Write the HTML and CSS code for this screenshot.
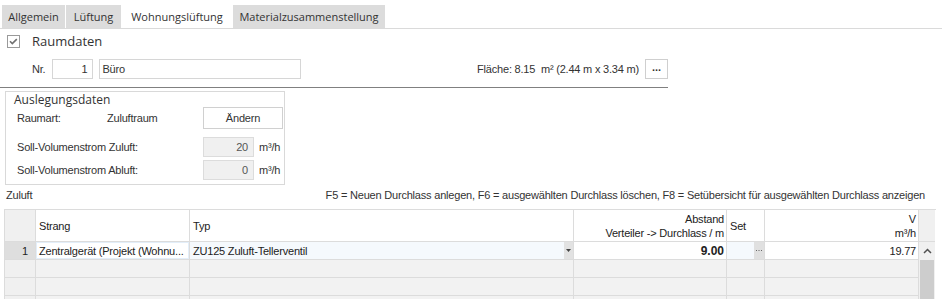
FILE: index.html
```html
<!DOCTYPE html>
<html lang="de">
<head>
    <meta charset="UTF-8">
    <title>Wohnungslüftung</title>
    <link rel="stylesheet" href="styles.css">
</head>
<body>
    <div class="tabs">
        <div class="tab tab-1">Allgemein</div>
        <div class="tab tab-2">Lüftung</div>
        <div class="tab tab-3 active">Wohnungslüftung</div>
        <div class="tab tab-4">Materialzusammenstellung</div>
    </div>

    <div class="section-head">
        <svg class="check" width="13" height="13" viewBox="0 0 13 13">
            <rect x="0.5" y="0.5" width="12" height="12" fill="#fff" stroke="#9a9a9a"/>
            <path d="M3 6.3 L5.3 8.6 L9.8 4.1" fill="none" stroke="#707070" stroke-width="1.6"/>
        </svg>
        <span>Raumdaten</span>
    </div>

    <div class="room-row">
        <span class="nr-label">Nr.</span>
        <div class="field field-nr">1</div>
        <div class="field field-name">Büro</div>
        <div class="spacer"></div>
        <span class="area">Fläche: 8.15 &nbsp;m² (2.44 m x 3.34 m)</span>
        <div class="dots-btn">...</div>
    </div>
    <div class="divider"></div>

    <div class="ausl">
        <div class="ausl-title">Auslegungsdaten</div>
        <div class="ausl-row row-art">
            <span class="lbl-art">Raumart:</span>
            <span class="val-art">Zuluftraum</span>
            <div class="btn">Ändern</div>
        </div>
        <div class="ausl-row row-zu">
            <span class="lbl-vol">Soll-Volumenstrom Zuluft:</span>
            <div class="num">20</div>
            <span class="unit">m³/h</span>
        </div>
        <div class="ausl-row row-ab">
            <span class="lbl-vol">Soll-Volumenstrom Abluft:</span>
            <div class="num">0</div>
            <span class="unit">m³/h</span>
        </div>
    </div>

    <div class="caption">
        <span>Zuluft</span>
        <span>F5 = Neuen Durchlass anlegen, F6 = ausgewählten Durchlass löschen, F8 = Setübersicht für ausgewählten Durchlass anzeigen</span>
    </div>

    <div class="grid">
        <div class="cell rowhead"></div>
        <div class="cell head">Strang</div>
        <div class="cell head">Typ</div>
        <div class="cell head right">Abstand<br>Verteiler -&gt; Durchlass / m</div>
        <div class="cell head">Set</div>
        <div class="cell head right">V<br>m³/h</div>
        <div class="cell corner"></div>

        <div class="cell rowhead current">1</div>
        <div class="cell focus">Zentralgerät (Projekt (Wohnu...</div>
        <div class="cell edit">
            <span class="edit-text">ZU125 Zuluft-Tellerventil</span>
            <span class="drop"><svg width="5" height="3" viewBox="0 0 5 3"><path d="M0 0 H5 L2.5 3 Z" fill="#444"/></svg></span>
        </div>
        <div class="cell right bold">9.00</div>
        <div class="cell edit">
            <span class="edit-text"></span>
            <span class="set-btn">
                <svg width="6" height="2" viewBox="0 0 6 2"><rect x="0" y="0" width="1" height="1" fill="#666"/><rect x="2.5" y="0" width="1" height="1" fill="#666"/><rect x="5" y="0" width="1" height="1" fill="#666"/></svg>
            </span>
        </div>
        <div class="cell right">19.77</div>
        <div class="scrollbar">
            <div class="arrow">
                <svg width="9" height="6" viewBox="0 0 9 6"><path d="M1 5 L4.5 1.5 L8 5" fill="none" stroke="#505050" stroke-width="1.5"/></svg>
            </div>
            <div class="thumb"></div>
        </div>

        <div class="cell rowhead"></div>
        <div class="cell empty"></div>
        <div class="cell empty"></div>
        <div class="cell empty"></div>
        <div class="cell empty"></div>
        <div class="cell empty"></div>

        <div class="cell rowhead"></div>
        <div class="cell empty"></div>
        <div class="cell empty"></div>
        <div class="cell empty"></div>
        <div class="cell empty"></div>
        <div class="cell empty"></div>

        <div class="cell rowhead"></div>
        <div class="cell empty"></div>
        <div class="cell empty"></div>
        <div class="cell empty"></div>
        <div class="cell empty"></div>
        <div class="cell empty"></div>
    </div>
</body>
</html>
```

FILE: styles.css
```css
body {
    margin: 0;
    width: 942px;
    height: 299px;
    overflow: hidden;
    background-color: #fff;
    color: #333;
    font-family: "Liberation Sans", Arial, sans-serif;
    font-size: 11px;
    letter-spacing: -0.2px;
}

/* tabs */
.tabs {
    display: flex;
    gap: 1px;
    margin-top: 5px;
    padding-left: 2px;
    border-bottom: 1px solid #dadada;
    font-family: "Open Sans", sans-serif;
    letter-spacing: 0;
}

.tab {
    height: 23px;
    line-height: 23px;
    background-color: #dcdcdc;
    color: #333;
    text-align: center;
}

.tab.active {
    background-color: #fff;
}

.tab-1 { width: 63px; }
.tab-2 { width: 55px; }
.tab-3 { width: 110px; }
.tab-4 { width: 152px; }

/* Raumdaten */
.section-head {
    display: flex;
    align-items: center;
    gap: 12px;
    height: 20px;
    margin-top: 2px;
    padding-left: 7px;
    font-family: "Open Sans", sans-serif;
    font-size: 13px;
    letter-spacing: 0;
}

.room-row {
    display: flex;
    align-items: center;
    width: 668px;
    height: 20px;
    margin-top: 8px;
}

.nr-label {
    margin-left: 32px;
    margin-right: 7px;
}

.field {
    box-sizing: border-box;
    height: 20px;
    line-height: 18px;
    border: 1px solid #d6d6d6;
    background-color: #fff;
}

.field-nr {
    width: 41px;
    padding-right: 5px;
    text-align: right;
}

.field-name {
    width: 202px;
    margin-left: 6px;
    padding-left: 2px;
}

.spacer {
    flex: 1;
}

.dots-btn {
    box-sizing: border-box;
    width: 23px;
    height: 20px;
    margin-left: 6px;
    border: 1px solid #cfcfcf;
    text-align: center;
    line-height: 14px;
    font-weight: bold;
    letter-spacing: 0;
}

.divider {
    width: 668px;
    margin-top: 8px;
    border-top: 1px solid #808080;
}

/* Auslegungsdaten */
.ausl {
    box-sizing: border-box;
    width: 280px;
    margin: 3px 0 0 5px;
    padding: 0 0 4px 8px;
    border: 1px solid #d9d9d9;
}

.ausl-title {
    height: 15px;
    line-height: 15px;
    font-family: "Open Sans", sans-serif;
    font-size: 12px;
    letter-spacing: 0;
}

.ausl-row {
    display: flex;
    align-items: center;
    margin-left: 3px;
}

.row-art {
    height: 22px;
}

.row-zu {
    height: 20px;
    margin-top: 8px;
}

.row-ab {
    height: 20px;
    margin-top: 3px;
}

.lbl-art {
    width: 90px;
}

.val-art {
    width: 96px;
}

.lbl-vol {
    width: 186px;
}

.btn {
    box-sizing: border-box;
    width: 80px;
    height: 22px;
    line-height: 20px;
    border: 1px solid #d0d0d0;
    text-align: center;
    background-color: #fff;
}

.num {
    box-sizing: border-box;
    width: 51px;
    height: 20px;
    line-height: 18px;
    padding-right: 5px;
    border: 1px solid #dcdcdc;
    background-color: #f0f0f0;
    color: #555;
    text-align: right;
}

.unit {
    margin-left: 5px;
}

/* caption above the grid */
.caption {
    display: flex;
    justify-content: space-between;
    height: 15px;
    line-height: 15px;
    margin-top: 3px;
    padding: 0 17px 0 6px;
}

/* grid */
.grid {
    display: grid;
    grid-template-columns: 31px 154px 384px 153px 38px 154px 16px;
    grid-template-rows: 32px 18px 18px 18px 18px;
    width: 931px;
    height: 89px;
    overflow: hidden;
    margin: 6px 0 0 4px;
    border-top: 1px solid #dcdcdc;
    border-left: 1px solid #dcdcdc;
    color: #222;
}

.cell {
    box-sizing: border-box;
    display: flex;
    align-items: center;
    padding: 0 3px;
    border-right: 1px solid #dcdcdc;
    border-bottom: 1px solid #dcdcdc;
    white-space: nowrap;
    overflow: hidden;
    line-height: 14px;
}

.cell.right {
    justify-content: flex-end;
    text-align: right;
    padding-right: 2px;
}

.cell.head {
    background-color: #fff;
}

.cell.rowhead {
    justify-content: flex-end;
    padding-right: 7px;
    background-color: #f0f0f0;
}

.cell.rowhead.current {
    background-color: #dedede;
}

.cell.corner {
    background-color: #f0f0f0;
    border-right: none;
}

.cell.focus {
    background-color: #fff;
    box-shadow: inset 0 0 0 1px #e3eef9;
}

.cell.edit {
    padding: 0;
    background-color: #f5f9fd;
}

.edit-text {
    flex: 1;
    padding-left: 3px;
}

.drop {
    display: flex;
    align-items: center;
    justify-content: center;
    width: 9px;
    height: 100%;
    background-color: #e2e2e2;
}

.set-btn {
    display: flex;
    align-items: center;
    justify-content: center;
    width: 10px;
    height: 100%;
    background-color: #e0e0e0;
}

.cell.bold {
    font-size: 12px;
    font-weight: bold;
    letter-spacing: 0;
}

.cell.empty {
    background-color: #f2f2f2;
}

.scrollbar {
    grid-row: 2 / span 4;
    grid-column: 7;
    display: flex;
    flex-direction: column;
    background-color: #f0f0f0;
}

.arrow {
    display: flex;
    align-items: center;
    justify-content: center;
    height: 18px;
}

.thumb {
    flex: 1;
    margin: 0 1px;
    background-color: #cdcdcd;
}
```
